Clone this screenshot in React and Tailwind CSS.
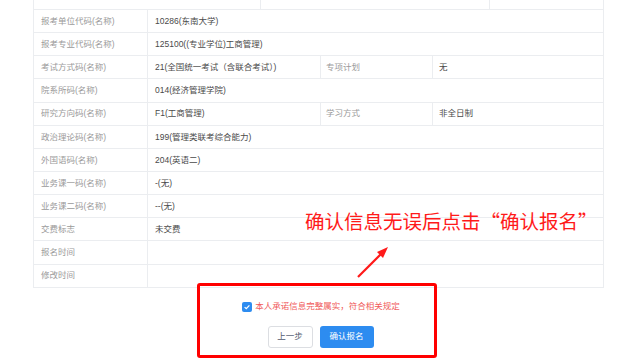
import React from "react";

const ROWS = [
  {label: "报考单位代码(名称)", value: "10286(东南大学)"},
  {label: "报考专业代码(名称)", value: "125100((专业学位)工商管理)"},
  {label: "考试方式码(名称)", value: "21(全国统一考试（含联合考试）)", label2: "专项计划", value2: "无"},
  {label: "院系所码(名称)", value: "014(经济管理学院)"},
  {label: "研究方向码(名称)", value: "F1(工商管理)", label2: "学习方式", value2: "非全日制"},
  {label: "政治理论码(名称)", value: "199(管理类联考综合能力)"},
  {label: "外国语码(名称)", value: "204(英语二)"},
  {label: "业务课一码(名称)", value: "-(无)"},
  {label: "业务课二码(名称)", value: "--(无)"},
  {label: "交费标志", value: "未交费"},
  {label: "报名时间", value: ""},
  {label: "修改时间", value: ""},
];

function InfoRow({row}) {
  return (
      <div className="grid h-[23.15px] grid-cols-[114px_173px_112px_172px] border-b border-[#ebedf0] text-[8.5px] leading-none">
        <div className="flex items-center border-r border-[#ebedf0] pl-[7px] text-[#9a9a9a]">{row.label}</div>
        {row.label2 ? (
            <>
              <div className="flex items-center border-r border-[#ebedf0] pl-[7px] text-[#4a4a4a]">{row.value}</div>
              <div className="flex items-center border-r border-[#ebedf0] pl-[5px] text-[#9a9a9a]">{row.label2}</div>
              <div className="flex items-center pl-[6px] text-[#4a4a4a]">{row.value2}</div>
            </>
        ) : (
            <div className="col-span-3 flex items-center pl-[7px] text-[#4a4a4a]">{row.value}</div>
        )}
      </div>
  );
}

export default function App() {
  return (
      <div
          className="relative h-[362px] w-[639px] overflow-hidden bg-white"
          style={{fontFamily: '"Liberation Sans", "Noto Sans CJK SC", sans-serif'}}
      >
        <div className="ml-[33px] w-[571px]">
          <div className="flex h-[10px] border-b border-l border-[#ebedf0]">
            <div className="w-[227px] border-r border-[#ebedf0]" />
            <div className="w-[229px] border-r border-[#ebedf0]" />
            <div className="w-[114px] border-r border-[#ebedf0]" />
          </div>
          <div className="border-l border-r border-[#ebedf0]">
            {ROWS.map((row) => <InfoRow key={row.label} row={row} />)}
          </div>
        </div>

        <div className="mt-[14px] flex items-center justify-center gap-[3px] pl-[3px]">
          <span className="flex h-[10px] w-[10px] items-center justify-center rounded-[2px] bg-[#2d8cf0]">
            <svg width="8" height="8" viewBox="0 0 8 8">
              <path d="M1.6 4.1 L3.3 5.7 L6.4 2.4" fill="none" stroke="white" strokeWidth="1.3" />
            </svg>
          </span>
          <span className="text-[8.5px] leading-none text-[#f05a5a]">本人承诺信息完整属实，符合相关规定</span>
        </div>

        <div className="mt-[14px] flex justify-center gap-[7px] pl-[2px]">
          <button className="h-[22px] w-[45px] rounded-[3px] border border-[#dcdee2] bg-white text-[8.5px] text-[#515a6e]">
            上一步
          </button>
          <button className="h-[22px] w-[54px] rounded-[3px] bg-[#2d8cf0] text-[8.5px] text-white">
            确认报名
          </button>
        </div>

        {/* annotation overlay */}
        <div className="absolute left-[305px] top-[208px] text-[19.5px] leading-[26px] text-[#ff1a1a]"
             style={{fontFamily: '"Noto Sans CJK SC", sans-serif'}}>
          确认信息无误后点击“确认报名”
        </div>
        <svg className="absolute left-[350px] top-[240px]" width="50" height="45" viewBox="0 0 50 45">
          <path d="M8 37 L33 12" stroke="#ff1a1a" strokeWidth="2.2" fill="none" />
          <path d="M38 7 L27 12 L33 18 Z" fill="#ff1a1a" />
        </svg>
        <div className="absolute left-[197px] top-[283px] h-[75px] w-[240px] rounded-[3px] border-[3px] border-[#ff0000]" />
      </div>
  );
}
